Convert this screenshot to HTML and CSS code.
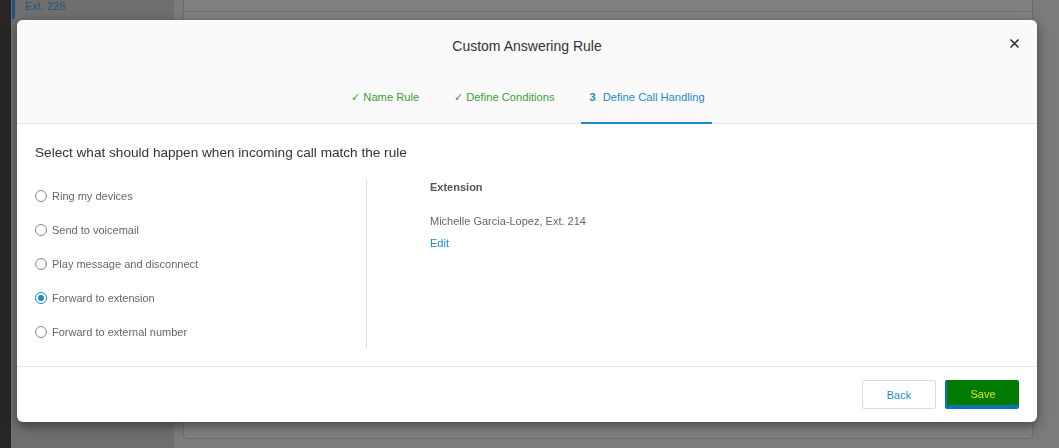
FILE: index.html
```html
<!DOCTYPE html>
<html lang="en">
<head>
  <meta charset="UTF-8">
  <meta name="viewport" content="width=device-width, initial-scale=1.0">
  <title>Custom Answering Rule</title>
  <link rel="stylesheet" href="styles.css">
</head>
<body>
  <div class="page">
    <div class="edge"></div>
    <aside class="sidebar">
      <div class="side-item">Ext. 228</div>
    </aside>
    <main class="main">
      <div class="card">
        <div class="card-top"></div>
      </div>
    </main>
  </div>

  <div class="overlay">
    <div class="modal">
      <div class="modal-header">
        <h2 class="modal-title">Custom Answering Rule</h2>
        <button class="close" aria-label="Close">
          <svg width="9" height="9" viewBox="0 0 9 9"><path d="M1 1 L8 8 M8 1 L1 8" stroke="#333" stroke-width="1.7" stroke-linecap="round"/></svg>
        </button>
        <ul class="steps">
          <li class="step done"><span class="mark">&#10003;</span>Name Rule</li>
          <li class="step done"><span class="mark">&#10003;</span>Define Conditions</li>
          <li class="step active"><span class="num">3</span>Define Call Handling</li>
        </ul>
      </div>

      <div class="modal-body">
        <p class="lead">Select what should happen when incoming call match the rule</p>
        <div class="columns">
          <div class="options">
            <label class="option"><span class="radio"></span>Ring my devices</label>
            <label class="option"><span class="radio"></span>Send to voicemail</label>
            <label class="option"><span class="radio"></span>Play message and disconnect</label>
            <label class="option"><span class="radio checked"></span>Forward to extension</label>
            <label class="option"><span class="radio"></span>Forward to external number</label>
          </div>
          <div class="details">
            <div class="details-title">Extension</div>
            <div class="details-value">Michelle Garcia-Lopez, Ext. 214</div>
            <a class="details-link" href="#">Edit</a>
          </div>
        </div>
      </div>

      <div class="modal-footer">
        <button class="btn btn-back">Back</button>
        <button class="btn btn-save">Save</button>
      </div>
    </div>
  </div>
</body>
</html>
```

FILE: styles.css
```css
* {
  box-sizing: border-box;
}
body {
  margin: 0;
  font-family: "Liberation Sans", Arial, sans-serif;
  background-color: #262626;
  overflow: hidden;
}
.page {
  display: flex;
  height: 448px;
}
.edge {
  width: 11px;
  background-color: #262626;
}
.sidebar {
  width: 163px;
  background-color: #6f6f6f;
}
.side-item {
  margin-top: -4px;
  padding: 2px 0 5px 10px;
  border-left: 3px solid #1f5580;
  margin-left: 1px;
  font-size: 11px;
  line-height: 16px;
  color: #2b5478;
}
.main {
  flex: 1;
  background-color: #7b7b7b;
  padding: 0 26px 5px 9px;
}
.card {
  height: 100%;
  margin-top: -4px;
  border: 1px solid #6c6c6c;
  border-radius: 4px;
  background-color: #808080;
}
.card-top {
  height: 15px;
  border-bottom: 1px solid #707070;
}

.overlay {
  position: fixed;
  top: 0;
  left: 0;
  right: 0;
  bottom: 0;
  padding: 20px 22px 0 17px;
}
.modal {
  width: 1020px;
  height: 402px;
  background-color: #ffffff;
  border-radius: 6px;
  box-shadow: 0 4px 12px rgba(0, 0, 0, 0.45);
  display: flex;
  flex-direction: column;
  overflow: hidden;
}
.modal-header {
  position: relative;
  background-color: #fafafa;
  border-bottom: 1px solid #e5e5e5;
}
.modal-title {
  margin: 0;
  padding: 16px 0 14px;
  text-align: center;
  font-size: 14px;
  line-height: 20px;
  font-weight: normal;
  color: #333;
}
.close {
  position: absolute;
  top: 19px;
  right: 18px;
  padding: 0;
  border: none;
  background: none;
  cursor: pointer;
  display: flex;
}
.steps {
  list-style: none;
  margin: 0 0 -1px;
  padding: 0;
  display: flex;
  justify-content: center;
  gap: 17px;
}
.step {
  padding: 19px 9px 17px;
  font-size: 11.2px;
  line-height: 16px;
  border-bottom: 2px solid transparent;
}
.step.done {
  color: #3f9a3a;
}
.step.active {
  color: #1d8ad0;
  border-bottom-color: #1d8ad0;
  padding-right: 7px;
}
.mark {
  font-size: 11px;
  margin-right: 3px;
}
.num {
  font-weight: bold;
  font-size: 11px;
  margin-right: 7px;
}

.modal-body {
  flex: 1;
  padding: 19px 18px 0 18px;
}
.lead {
  margin: 0 0 16px;
  font-size: 13.6px;
  line-height: 20px;
  color: #333;
}
.columns {
  display: flex;
  height: 169px;
}
.options {
  width: 332px;
  border-right: 1px solid #dcdcdc;
}
.option {
  display: flex;
  align-items: center;
  height: 34px;
  font-size: 11px;
  color: #666;
}
.radio {
  width: 12px;
  height: 12px;
  border: 1px solid #8a8a8a;
  border-radius: 50%;
  margin-right: 5px;
  display: flex;
  align-items: center;
  justify-content: center;
}
.radio.checked {
  border-color: #1d8ad0;
}
.radio.checked::after {
  content: "";
  width: 6px;
  height: 6px;
  border-radius: 50%;
  background-color: #1d8ad0;
}
.details {
  padding: 0 0 0 63px;
  font-size: 11px;
}
.details-title {
  font-weight: bold;
  color: #555;
  line-height: 16px;
}
.details-value {
  margin-top: 18px;
  color: #666;
  line-height: 16px;
}
.details-link {
  display: inline-block;
  margin-top: 6px;
  color: #1d8ad0;
  text-decoration: none;
  line-height: 16px;
}

.modal-footer {
  height: 56px;
  border-top: 1px solid #e5e5e5;
  display: flex;
  justify-content: flex-end;
  align-items: center;
  gap: 9px;
  padding: 0 18px;
}
.btn {
  width: 74px;
  height: 29px;
  font-family: "Liberation Sans", Arial, sans-serif;
  font-size: 11px;
  border-radius: 2px;
  cursor: pointer;
}
.btn-back {
  background-color: #fff;
  border: 1px solid #dcdcdc;
  color: #1d8ad0;
}
.btn-save {
  background-color: #007a00;
  border: none;
  border-left: 2px solid #0a72b5;
  border-bottom: 4px solid #0a72b5;
  color: #e2e600;
  padding-top: 4px;
}
```
